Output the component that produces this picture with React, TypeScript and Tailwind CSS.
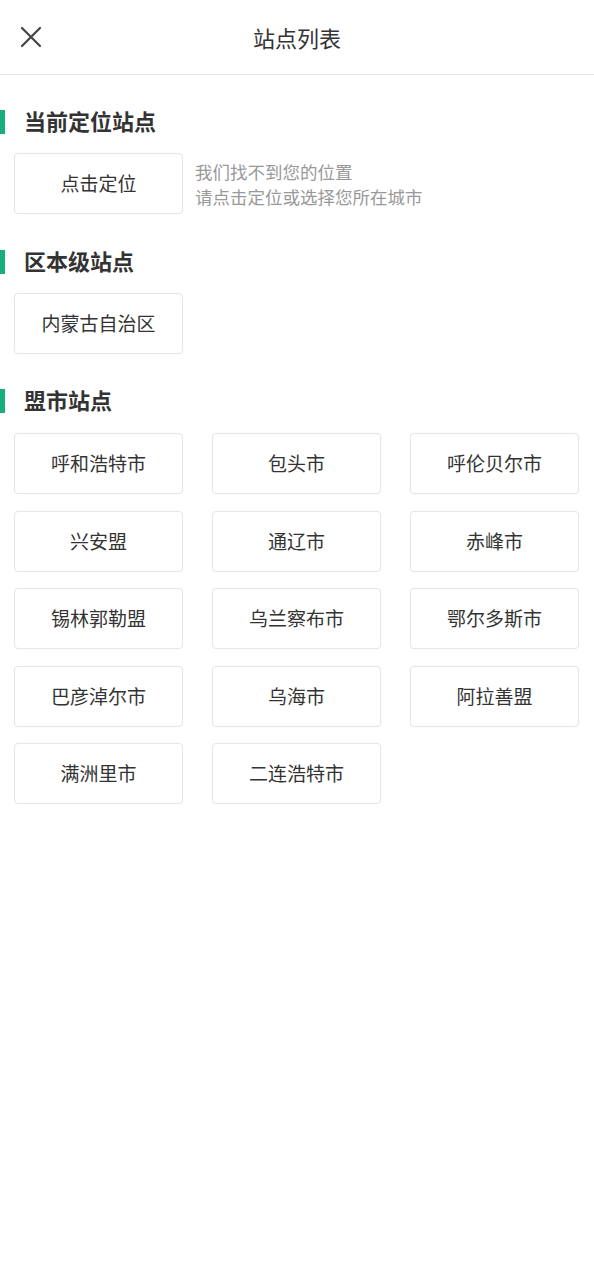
import { useState } from "react";

const font = { fontFamily: '"Noto Sans CJK SC", "Noto Sans", sans-serif' };

const cities = [
  "呼和浩特市",
  "包头市",
  "呼伦贝尔市",
  "兴安盟",
  "通辽市",
  "赤峰市",
  "锡林郭勒盟",
  "乌兰察布市",
  "鄂尔多斯市",
  "巴彦淖尔市",
  "乌海市",
  "阿拉善盟",
  "满洲里市",
  "二连浩特市",
];

const SectionTitle = ({ children }: { children: string }) => (
  <div className="flex items-center h-[24px]">
    <div className="w-[5px] h-[24px] bg-[#19ad7b]" />
    <div className="ml-[19px] mb-[4px] text-[22px] font-bold text-[#333] leading-none">{children}</div>
  </div>
);

const SiteButton = ({ label, onClick }: { label: string; onClick?: () => void }) => (
  <button
    onClick={onClick}
    className="w-[169px] h-[61px] flex items-center justify-center rounded-[4px] border border-[#e6e6e6] bg-white text-[19px] text-[#333] shadow-[0_0_2px_rgba(0,0,0,0.04)]"
  >
    {label}
  </button>
);

export default function App() {
  const [picked, setPicked] = useState("");

  return (
    <div className="w-full min-h-screen bg-white" style={font}>
      {/* header */}
      <div className="relative h-[75px] flex items-center justify-center border-b border-[#e5e5e5]">
        <button className="absolute left-[19px] top-[25px] w-[24px] h-[24px]">
          <svg viewBox="0 0 24 24" width="24" height="24" fill="none" stroke="#444" strokeWidth="2.2" strokeLinecap="round">
            <path d="M3 3 L21 21 M21 3 L3 21" />
          </svg>
        </button>
        <div className="text-[22px] text-[#333]">站点列表</div>
      </div>

      {/* 当前定位 */}
      <div className="mt-[35px]">
        <SectionTitle>当前定位站点</SectionTitle>
        <div className="mt-[19px] pl-[14px] flex items-center gap-[12px]">
          <SiteButton label={picked || "点击定位"} />
          <div className="text-[17.5px] leading-[25px] text-[#999]">
            <div>我们找不到您的位置</div>
            <div>请点击定位或选择您所在城市</div>
          </div>
        </div>
      </div>

      {/* 区本级 */}
      <div className="mt-[36px]">
        <SectionTitle>区本级站点</SectionTitle>
        <div className="mt-[19px] pl-[14px]">
          <SiteButton label="内蒙古自治区" onClick={() => setPicked("内蒙古自治区")} />
        </div>
      </div>

      {/* 盟市 */}
      <div className="mt-[35px]">
        <SectionTitle>盟市站点</SectionTitle>
        <div className="mt-[20px] px-[14px] grid grid-cols-[169px_169px_169px] gap-x-[29px] gap-y-[16.5px]">
          {cities.map((c) => (
            <SiteButton key={c} label={c} onClick={() => setPicked(c)} />
          ))}
        </div>
      </div>
    </div>
  );
}
